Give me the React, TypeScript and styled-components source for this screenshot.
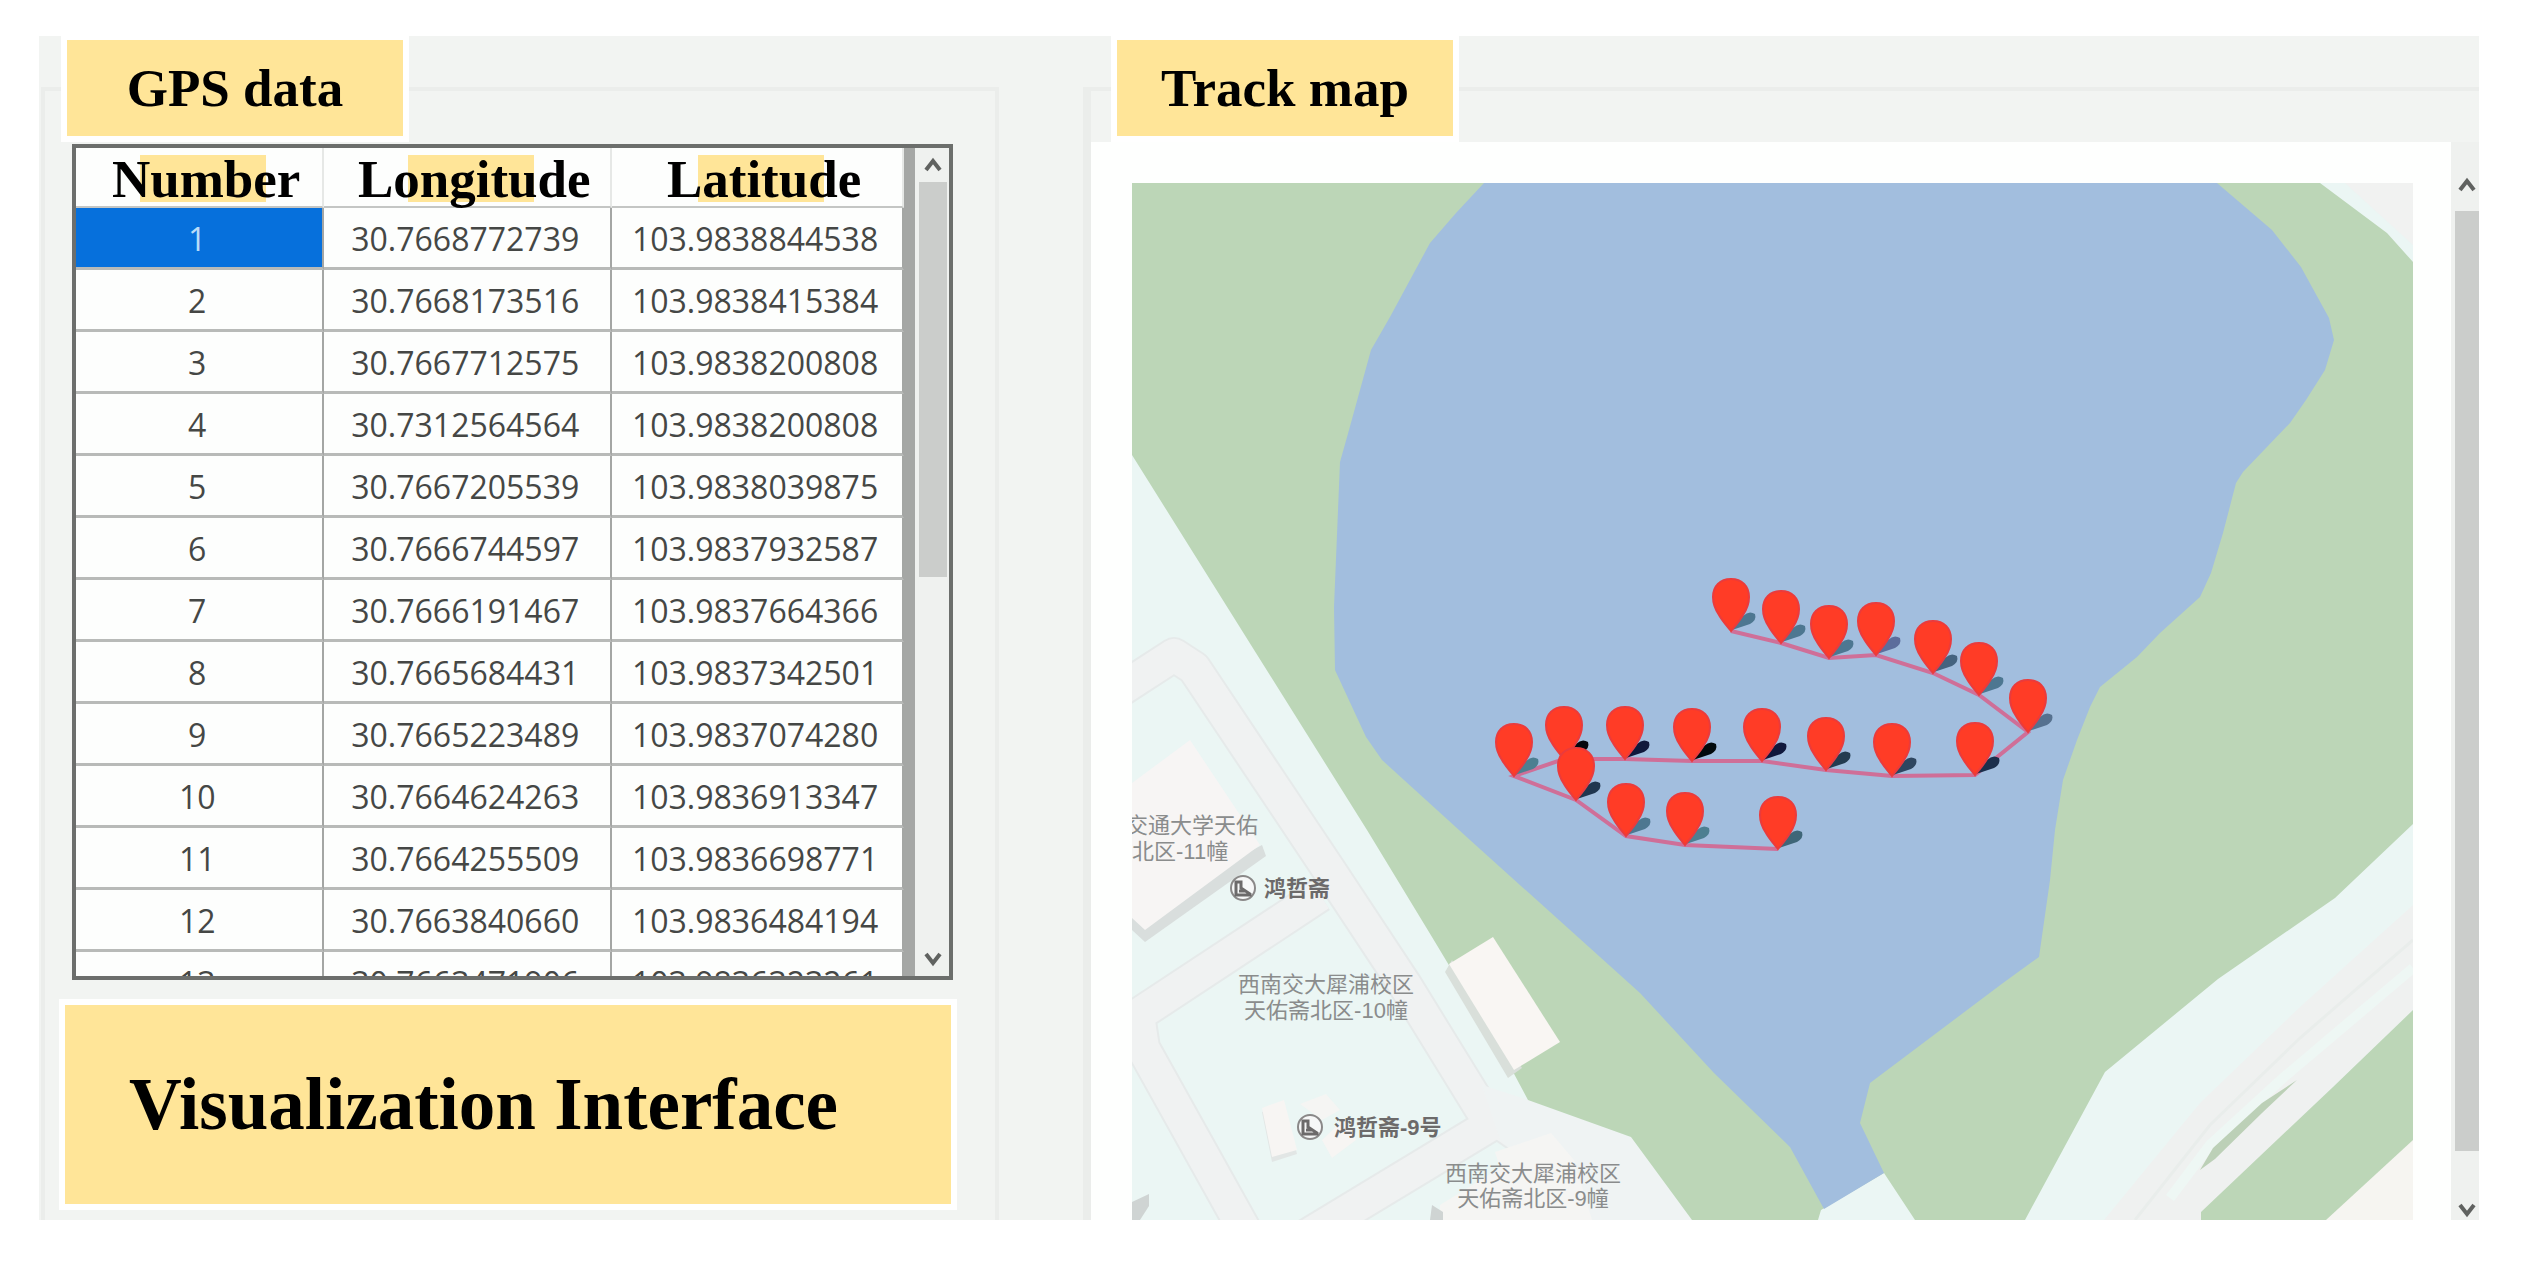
import React from "react";
import styled, { createGlobalStyle } from "styled-components";

const GlobalStyle = createGlobalStyle`
  *, *::before, *::after { box-sizing: border-box; }
  body {
    margin: 0;
    background: #ffffff;
    color: #000000;
    font-family: "Liberation Serif", "Times New Roman", serif;
  }
`;

const Page = styled.div`
  padding: 36px 50px 47px 39px;
`;

const Window = styled.main`
  display: grid;
  grid-template-columns: minmax(0, 958fr) minmax(0, 1396fr);
  column-gap: 84px;
  padding-left: 2px;
  background: #f2f4f2;
`;

const Group = styled.fieldset`
  min-width: 0;
  margin: 0;
  padding: 0;
  border: 0 solid #ebedeb;
  border-top-width: 4px;
`;

const DataGroup = styled(Group)`
  border-left-width: 4px;
  border-right-width: 4px;
`;

const MapGroup = styled(Group)`
  border-left-width: 8px;
`;

const GroupTitle = styled.legend<{ $indent: number }>`
  display: flex;
  align-items: center;
  justify-content: center;
  width: 348px;
  height: 106px;
  margin-left: ${(p) => p.$indent}px;
  padding: 0;
  border: 6px solid #ffffff;
  border-top-width: 4px;
  background: #ffe598;
  font-size: 53px;
  font-weight: 700;
  white-space: nowrap;
`;

const DataBody = styled.div`
  padding: 2px 38px 10px 14px;
`;

const TableFrame = styled.div`
  display: flex;
  height: 836px;
  margin: 0 4px 0 13px;
  overflow: hidden;
  border: 4px solid #6c6e6c;
  background: #fdfefd;
`;

const DataTable = styled.table`
  flex: 1;
  align-self: flex-start;
  min-width: 0;
  table-layout: fixed;
  border-collapse: separate;
  border-spacing: 0;
`;

const NumberCol = styled.col`
  width: 30%;
`;

const HeadCell = styled.th`
  height: 60px;
  padding: 4px 0 0 14px;
  border-bottom: 2px solid #c4c6c4;
  border-right: 2px solid #e6e8e6;
  background: linear-gradient(#ffe598, #ffe598) calc(50% + 4px) 7px / 126px 47px no-repeat;
  font-size: 53px;
  line-height: 54px;
`;

const Cell = styled.td<{ $selected?: boolean }>`
  height: 62px;
  padding: 3px 4px 0 0;
  border-right: 2px solid #a4a6a4;
  border-bottom: 3px solid #b8bab8;
  background: ${(p) => (p.$selected ? "#0670dc" : "transparent")};
  color: ${(p) => (p.$selected ? "#b9dcf8" : "#454745")};
  font-family: "Open Sans", "Noto Sans", sans-serif;
  font-size: 32px;
  line-height: 56px;
  text-align: center;
`;

const Divider = styled.div`
  width: 11px;
  background: #a5a7a5;
`;

const ScrollBar = styled.div<{ $width: number }>`
  display: flex;
  flex-direction: column;
  flex: none;
  width: ${(p) => p.$width}px;
  padding: 0 2px 0 4px;
  background: #eff1ef;
`;

const MapScrollBar = styled(ScrollBar)`
  padding: 16px 0 0 4px;
`;

const ScrollButton = styled.button<{ $height: number }>`
  display: flex;
  align-items: center;
  justify-content: center;
  height: ${(p) => p.$height}px;
  padding: 0;
  border: 0;
  background: transparent;
`;

const Track = styled.div`
  display: flex;
  flex: 1;
  flex-direction: column;
`;

const Thumb = styled.div<{ $size: number }>`
  height: ${(p) => p.$size}%;
  background: #cbcdcb;
`;

const Banner = styled.h1`
  display: flex;
  align-items: center;
  height: 211px;
  margin: 19px 0 0;
  padding-left: 64px;
  border: 6px solid #ffffff;
  background: #ffe598;
  font-size: 73px;
  font-weight: 700;
  white-space: nowrap;
`;

const MapBody = styled.div`
  display: flex;
`;

const MapPanel = styled.div`
  flex: 1;
  min-width: 0;
  padding: 41px 38px 0 41px;
  background: #fefffe;
`;

const MapDrawing = styled.svg`
  display: block;
  width: 100%;
  height: auto;
`;

const MapLabel = styled.text<{ $strong?: boolean }>`
  fill: ${(p) => (p.$strong ? "#6c6a6a" : "#8a8c8c")};
  font-family: "Liberation Sans", "Noto Sans CJK SC", sans-serif;
  font-size: 22px;
  font-weight: ${(p) => (p.$strong ? 700 : 400)};
`;

const rows: [string, string][] = [
  ["30.7668772739", "103.9838844538"],
  ["30.7668173516", "103.9838415384"],
  ["30.7667712575", "103.9838200808"],
  ["30.7312564564", "103.9838200808"],
  ["30.7667205539", "103.9838039875"],
  ["30.7666744597", "103.9837932587"],
  ["30.7666191467", "103.9837664366"],
  ["30.7665684431", "103.9837342501"],
  ["30.7665223489", "103.9837074280"],
  ["30.7664624263", "103.9836913347"],
  ["30.7664255509", "103.9836698771"],
  ["30.7663840660", "103.9836484194"],
  ["30.7663471906", "103.9836323261"],
];

// Tip of each pin, in travel order; the third value is the shadow colour.
const pins: [number, number, string][] = [
  [1731, 631, "#4d7791"],
  [1781, 643, "#4d7791"],
  [1829, 658, "#4d7791"],
  [1876, 655, "#5c6d9c"],
  [1933, 673, "#45637f"],
  [1979, 695, "#4d7791"],
  [2028, 732, "#56718f"],
  [1975, 775, "#1c2f4c"],
  [1892, 776, "#2f4660"],
  [1826, 770, "#233c50"],
  [1762, 761, "#10183c"],
  [1692, 761, "#020a0c"],
  [1625, 759, "#10183c"],
  [1564, 759, "#05070f"],
  [1514, 776, "#4d7f91"],
  [1576, 800, "#20364f"],
  [1626, 836, "#4d7791"],
  [1685, 845, "#4d7f91"],
  [1778, 849, "#3f6678"],
];

function Chevron({ down }: { down?: boolean }) {
  return (
    <svg width="22" height="18" viewBox="0 0 22 18" fill="none" stroke="#606260" strokeWidth="4">
      <path d={down ? "M4 4 L11 13 L18 4" : "M4 14 L11 5 L18 14"} />
    </svg>
  );
}

function Pin({ x, y, shadow }: { x: number; y: number; shadow: string }) {
  return (
    <g transform={`translate(${x} ${y})`}>
      <path d="M1 -1 L12 -15 Q18 -21 24 -17 Q26 -11 19 -7 Z" fill={shadow} />
      <path
        d="M0 0 C-3 -4 -8 -9 -12 -16 C-16 -22 -18 -27 -18 -34 C-18 -45 -11 -52 0 -52 C11 -52 18 -45 18 -34 C18 -27 16 -22 12 -16 C8 -9 3 -4 0 0 Z"
        fill="#ff3c26"
        stroke="#ea3b3c"
        strokeWidth="2"
      />
    </g>
  );
}

function PlaceIcon({ x, y }: { x: number; y: number }) {
  return (
    <g transform={`translate(${x} ${y})`} fill="none" stroke="#8a8888" strokeWidth="2">
      <circle r="12" fill="#f6f7f7" />
      <path d="M-7 7 V-6 H-2 V0 L7 6 V7 Z M-4 3 H2" stroke="#6c6a6a" strokeWidth="3" />
    </g>
  );
}

function TrackMap() {
  return (
    <MapDrawing viewBox="1132 183 1281 1037" role="img" aria-label="Track map">
      <rect x="1132" y="183" width="1281" height="1037" fill="#ebf6f4" />

      {/* campus roads */}
      <g fill="none" stroke="#e6eaea" strokeWidth="36" strokeLinejoin="round">
        <path d="M1120 690 L1174 655 L1194 668 L1329 870 L1405 985 L1482 1110 L1540 1150 L1660 1250" />
        <path d="M1320 895 L1138 1015 L1143 1048 L1250 1240" />
        <path d="M1490 1125 L1300 1240" />
      </g>
      <g fill="none" stroke="#f0f2f2" strokeWidth="32" strokeLinejoin="round">
        <path d="M1120 690 L1174 655 L1194 668 L1329 870 L1405 985 L1482 1110 L1540 1150 L1660 1250" />
        <path d="M1320 895 L1138 1015 L1143 1048 L1250 1240" />
        <path d="M1490 1125 L1300 1240" />
      </g>
      <path d="M1482 1085 L1528 1100 L1631 1137 L1692 1220 L1590 1220 L1500 1140 Z" fill="#eff3f3" />

      {/* park */}
      <path
        d="M1132 183 H2320 L2387 233 L2413 262 V824 L2335 898 L2218 979 L2105 1072 L2025 1220 H1915 L1884 1173 L1821 1210 L1818 1220 H1692 L1631 1137 L1528 1100 L1512 1070 L1432 937 L1367 830 L1256 653 L1132 455 Z"
        fill="#bcd6b7"
      />
      <path d="M2345 183 H2413 V245 Z" fill="#f1f2f1" />

      {/* lake */}
      <path
        d="M1484 183 L1456 213 L1430 243 L1390 317 L1371 350 L1349 430 L1340 462 L1334 607 L1335 670 L1366 737 L1382 760 L1470 840 L1640 993 L1714 1073 L1790 1147 L1824 1209 L1884 1173 L1860 1123 L1870 1083 L2003 983 L2039 957 L2050 880 L2055 830 L2063 780 L2077 740 L2090 707 L2100 687 L2137 657 L2160 633 L2200 597 L2211 573 L2223 533 L2236 483 L2243 472 L2290 423 L2306 400 L2325 370 L2334 340 L2329 318 L2301 267 L2272 230 L2217 183 Z"
        fill="#a2bede"
      />

      {/* main road */}
      <path d="M2413 905 L2300 1007 L2200 1103 L2104 1220 H2201 L2333 1087 L2413 1010 Z" fill="#eff1f0" />
      <path d="M2413 940 L2300 1038 L2210 1125 L2135 1220" fill="none" stroke="#e9edeb" strokeWidth="3" />
      <path d="M2413 968 L2283 1078 L2210 1145 L2170 1198" fill="none" stroke="#eef7f4" strokeWidth="10" />
      <path d="M2297 1080 L2262 1103 L2213 1148 L2200 1170 L2215 1159 L2262 1113 Z" fill="#bcd0b7" />
      <path d="M2413 1010 L2333 1087 L2201 1212 V1220 H2413 Z" fill="#bcd6b7" />
      <path d="M2413 1140 L2326 1220 H2413 Z" fill="#f6f5f1" />

      {/* buildings */}
      <path d="M1132 930 L1145 942 L1266 856 L1262 845 L1132 915 Z" fill="#d9dedd" />
      <path d="M1132 783 L1190 740 L1260 845 L1145 930 L1132 918 Z" fill="#f7f5f4" />
      <path d="M1445 972 L1508 1078 L1522 1068 L1452 960 Z" fill="#d9dfda" />
      <path d="M1449 964 L1493 937 L1560 1042 L1514 1070 Z" fill="#f9f6f3" />
      <path d="M1262 1112 L1284 1104 L1297 1154 L1272 1162 Z" fill="#e2e6e5" />
      <path d="M1262 1108 L1284 1100 L1297 1150 L1272 1157 Z" fill="#f7f5f3" />
      <path d="M1322 1140 L1345 1118 L1356 1140 L1332 1158 Z" fill="#f7f5f3" />
      <path d="M1300 1104 L1326 1094 L1340 1110 L1322 1120 Z" fill="#f5f5f3" />
      <path d="M1495 1152 L1551 1133 L1574 1160 L1592 1220 H1440 V1205 L1500 1168 Z" fill="#f5f5f3" />
      <path d="M1432 1205 L1443 1212 V1220 H1430 Z" fill="#cfd4d3" />
      <path d="M1132 1202 L1149 1194 V1206 L1140 1220 H1132 Z" fill="#cfd4d3" />

      <MapLabel x="1126" y="833">交通大学天佑</MapLabel>
      <MapLabel x="1132" y="859">北区-11幢</MapLabel>
      <MapLabel x="1326" y="992" textAnchor="middle">西南交大犀浦校区</MapLabel>
      <MapLabel x="1326" y="1018" textAnchor="middle">天佑斋北区-10幢</MapLabel>
      <MapLabel x="1533" y="1181" textAnchor="middle">西南交大犀浦校区</MapLabel>
      <MapLabel x="1533" y="1206" textAnchor="middle">天佑斋北区-9幢</MapLabel>
      <PlaceIcon x={1243} y={888} />
      <MapLabel $strong x="1264" y="896">鸿哲斋</MapLabel>
      <PlaceIcon x={1310} y={1127} />
      <MapLabel $strong x="1334" y="1135">鸿哲斋-9号</MapLabel>

      <polyline
        points={pins.map(([x, y]) => `${x},${y}`).join(" ")}
        fill="none"
        stroke="#cf6f98"
        strokeWidth="4"
      />
      {pins.map(([x, y, shadow]) => (
        <Pin key={`${x}-${y}`} x={x} y={y} shadow={shadow} />
      ))}
    </MapDrawing>
  );
}

export default function App() {
  return (
    <>
      <GlobalStyle />
      <Page>
        <Window>
          <DataGroup>
            <GroupTitle $indent={16}>GPS data</GroupTitle>
            <DataBody>
              <TableFrame>
                <DataTable>
                  <colgroup>
                    <NumberCol />
                    <col />
                    <col />
                  </colgroup>
                  <thead>
                    <tr>
                      <HeadCell scope="col">Number</HeadCell>
                      <HeadCell scope="col">Longitude</HeadCell>
                      <HeadCell scope="col">Latitude</HeadCell>
                    </tr>
                  </thead>
                  <tbody>
                    {rows.map(([longitude, latitude], i) => (
                      <tr key={i}>
                        <Cell $selected={i === 0}>{i + 1}</Cell>
                        <Cell>{longitude}</Cell>
                        <Cell>{latitude}</Cell>
                      </tr>
                    ))}
                  </tbody>
                </DataTable>
                <Divider />
                <ScrollBar $width={34}>
                  <ScrollButton $height={34} type="button" aria-label="Scroll table up">
                    <Chevron />
                  </ScrollButton>
                  <Track>
                    <Thumb $size={52} />
                  </Track>
                  <ScrollButton $height={34} type="button" aria-label="Scroll table down">
                    <Chevron down />
                  </ScrollButton>
                </ScrollBar>
              </TableFrame>
              <Banner>Visualization Interface</Banner>
            </DataBody>
          </DataGroup>
          <MapGroup>
            <GroupTitle $indent={20}>Track map</GroupTitle>
            <MapBody>
              <MapPanel>
                <TrackMap />
              </MapPanel>
              <MapScrollBar $width={28}>
                <ScrollButton $height={53} type="button" aria-label="Scroll map up">
                  <Chevron />
                </ScrollButton>
                <Track>
                  <Thumb $size={95} />
                </Track>
                <ScrollButton $height={20} type="button" aria-label="Scroll map down">
                  <Chevron down />
                </ScrollButton>
              </MapScrollBar>
            </MapBody>
          </MapGroup>
        </Window>
      </Page>
    </>
  );
}
